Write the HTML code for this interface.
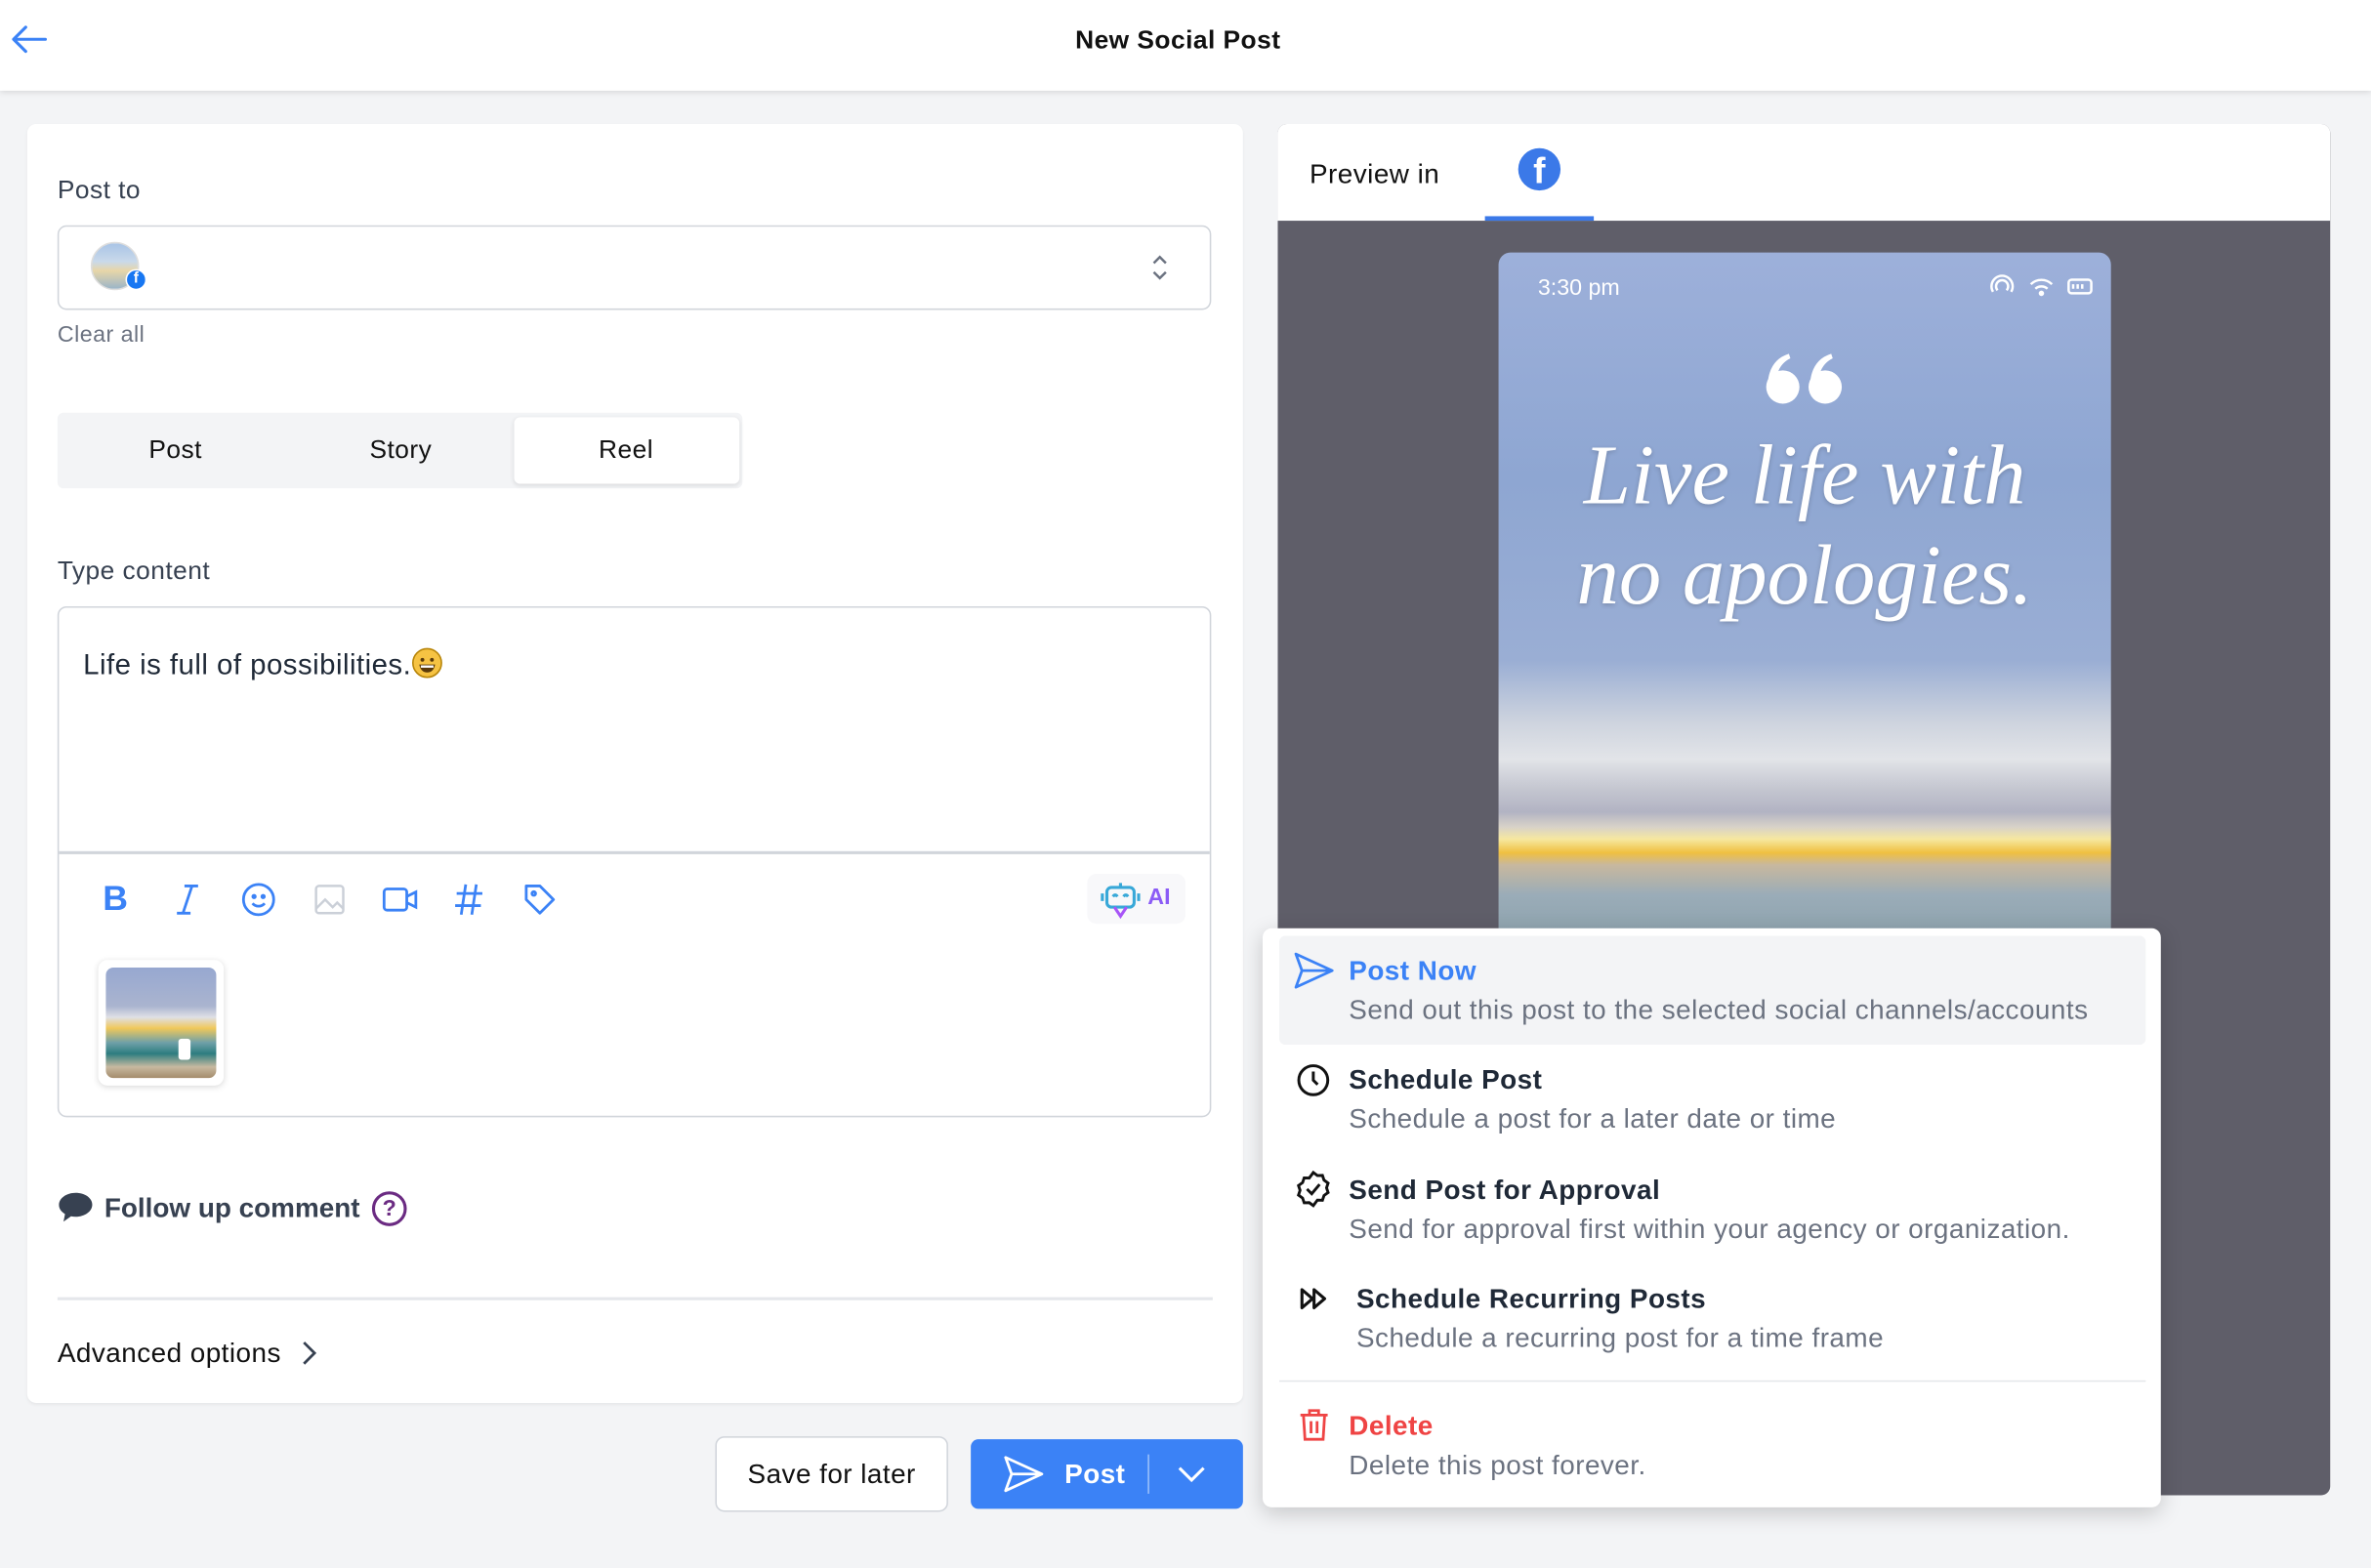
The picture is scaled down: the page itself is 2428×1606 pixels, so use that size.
<!DOCTYPE html>
<html><head><meta charset="utf-8"><style>
*{box-sizing:border-box;margin:0;padding:0}
body{width:2428px;height:1606px;overflow:hidden;background:#f3f4f6;font-family:"Liberation Sans",sans-serif}
#w{width:1568px;height:1037px;transform:scale(1.5485);transform-origin:0 0;position:relative;background:#f3f4f6}
.a{position:absolute}
.t{position:absolute;white-space:nowrap}
.g{letter-spacing:.3px}
</style></head><body><div id="w">
<div class="a" style="left:0;top:0;width:1568px;height:60px;background:#fff;box-shadow:0 1px 4px rgba(0,0,0,.12)"></div>
<svg class="a" style="left:6px;top:16px" width="26" height="20" viewBox="0 0 26 20"><path d="M24 10H3M11 2L3 10l8 8" stroke="#3b82f6" stroke-width="2" fill="none" stroke-linecap="round" stroke-linejoin="round"/></svg>
<div class="t" style="left:0;width:1558px;text-align:center;top:17px;font-size:17px;font-weight:bold;color:#111;letter-spacing:.3px">New Social Post</div>

<div class="a" style="left:18px;top:82px;width:804px;height:846px;background:#fff;border-radius:6px;box-shadow:0 1px 2px rgba(0,0,0,.05)"></div>
<div class="t g" style="left:38px;top:116px;font-size:17px;color:#374151">Post to</div>
<div class="a" style="left:38px;top:149px;width:763px;height:56px;border:1px solid #d1d5db;border-radius:6px"></div>
<div class="a" style="left:60px;top:160px;width:32px;height:32px;border-radius:50%;background:linear-gradient(#a9c4e6 0,#c9d9ea 40%,#e8d6a8 60%,#9bb5c8 100%);border:1px solid #ddd"></div>
<div class="a" style="left:83px;top:178px;width:14px;height:14px;border-radius:50%;background:#1877f2;border:1.5px solid #fff;color:#fff;font-size:10px;font-weight:bold;text-align:center;line-height:12px">f</div>
<svg class="a" style="left:760px;top:166px" width="14" height="22" viewBox="0 0 14 22"><path d="M3 8l4-4 4 4M3 14l4 4 4-4" stroke="#6b7280" stroke-width="1.6" fill="none"/></svg>
<div class="t g" style="left:38px;top:213px;font-size:15px;color:#6b7280">Clear all</div>
<div class="a" style="left:38px;top:273px;width:453px;height:50px;background:#f3f4f6;border-radius:4px"></div>
<div class="a" style="left:340px;top:276px;width:149px;height:44px;background:#fff;border-radius:4px;box-shadow:0 1px 3px rgba(0,0,0,.1)"></div>
<div class="t g" style="left:66px;width:100px;text-align:center;top:288px;font-size:17px;color:#111">Post</div>
<div class="t g" style="left:215px;width:100px;text-align:center;top:288px;font-size:17px;color:#111">Story</div>
<div class="t g" style="left:364px;width:100px;text-align:center;top:288px;font-size:17px;color:#111">Reel</div>
<div class="t g" style="left:38px;top:368px;font-size:17px;color:#374151">Type content</div>
<div class="a" style="left:38px;top:401px;width:763px;height:338px;border:1px solid #d1d5db;border-radius:6px"></div>
<div class="a" style="left:39px;top:563px;width:761px;height:2px;background:#d1d5db"></div>
<div class="t g" style="left:55px;top:428px;font-size:19px;color:#1f2937">Life is full of possibilities.<svg width="21" height="21" viewBox="0 0 20 20" style="vertical-align:-3px"><circle cx="10" cy="10" r="9" fill="#f6c343" stroke="#b8860b" stroke-width="1"/><circle cx="7" cy="8" r="1.2" fill="#5a3a0a"/><circle cx="13" cy="8" r="1.2" fill="#5a3a0a"/><path d="M5 11h10q-1 5-5 5t-5-5z" fill="#5a3a0a"/><path d="M6 11.5h8v1.5h-8z" fill="#fff"/></svg></div>
<div class="t" style="left:68px;top:581px;font-size:23px;font-weight:bold;color:#3b82f6">B</div>
<svg class="a" style="left:114px;top:584px" width="20" height="22" viewBox="0 0 20 22" fill="none" stroke="#3b82f6" stroke-width="1.8"><path d="M8 2h9M3 20h9M13 2L7 20"/></svg>
<svg class="a" style="left:159px;top:583px" width="24" height="24" viewBox="0 0 24 24" fill="none" stroke="#3b82f6" stroke-width="1.8"><circle cx="12" cy="12" r="10"/><path d="M8 14.5c2 2.5 6 2.5 8 0"/><circle cx="9" cy="10" r=".8" fill="#3b82f6"/><circle cx="15" cy="10" r=".8" fill="#3b82f6"/></svg>
<svg class="a" style="left:207px;top:584px" width="22" height="22" viewBox="0 0 22 22" fill="none" stroke="#cbd0d8" stroke-width="1.6"><rect x="2" y="2" width="18" height="18" rx="2"/><path d="M2 17l6-6 5 5 3-3 4 4"/></svg>
<svg class="a" style="left:252px;top:585px" width="26" height="20" viewBox="0 0 26 20" fill="none" stroke="#3b82f6" stroke-width="1.8"><rect x="2" y="3" width="15" height="14" rx="2"/><path d="M17 8l6-3v10l-6-3"/></svg>
<svg class="a" style="left:299px;top:583px" width="22" height="24" viewBox="0 0 22 24" fill="none" stroke="#3b82f6" stroke-width="1.8"><path d="M9 2L6 22M16 2l-3 20M3 8h17M2 16h17"/></svg>
<svg class="a" style="left:345px;top:583px" width="24" height="24" viewBox="0 0 24 24" fill="none" stroke="#3b82f6" stroke-width="1.8"><path d="M3 3h9l9 9-9 9-9-9z" stroke-linejoin="round"/><circle cx="8" cy="8" r="1.2"/></svg>
<div class="a" style="left:719px;top:578px;width:65px;height:33px;background:#f8f8fa;border-radius:6px"></div>
<svg class="a" style="left:727px;top:581px" width="28" height="28" viewBox="0 0 28 28" fill="none" stroke-width="2"><rect x="5" y="6" width="18" height="13" rx="3" stroke="#38a8d8"/><path d="M14 3v3M2 10v5M26 10v5" stroke="#38a8d8"/><path d="M10 19l4 6 4-6" stroke="#a855f7"/><path d="M9 12q1.5-2 3 0M16 12q1.5-2 3 0" stroke="#38a8d8"/></svg>
<div class="t" style="left:759px;top:585px;font-size:15px;font-weight:bold;color:#8b5cf6">AI</div>
<div class="a" style="left:65px;top:635px;width:83px;height:83px;border-radius:6px;background:#fff;box-shadow:0 1px 4px rgba(0,0,0,.15)"></div>
<div class="a" style="left:70px;top:640px;width:73px;height:73px;border-radius:5px;background:linear-gradient(#97a8d0 0,#aab4cf 35%,#dfe0e6 45%,#f0c85a 55%,#6fa0a8 68%,#2d7d80 78%,#c7b9a0 90%,#a48c6c 100%)"></div>
<div class="a" style="left:118px;top:687px;width:8px;height:14px;background:#fff;border-radius:2px"></div>
<svg class="a" style="left:38px;top:787px" width="24" height="24" viewBox="0 0 24 24"><path d="M12 2C6 2 1 5.5 1 10c0 2.5 1.5 4.5 4 6l-1 5 5-3.5c1 .2 2 .3 3 .3 6 0 11-3.5 11-8S18 2 12 2z" fill="#374151"/></svg>
<div class="t" style="left:69px;top:789px;font-size:18px;font-weight:bold;color:#374151">Follow up comment</div>
<div class="a" style="left:246px;top:788px;width:23px;height:23px;border-radius:50%;border:2px solid #6b2b82;color:#6b2b82;font-size:15px;font-weight:bold;text-align:center;line-height:19px">?</div>
<div class="a" style="left:38px;top:858px;width:764px;height:2px;background:#e5e7eb"></div>
<div class="t g" style="left:38px;top:885px;font-size:18px;color:#111">Advanced options</div>
<svg class="a" style="left:198px;top:886px" width="12" height="18" viewBox="0 0 12 18"><path d="M3 2l7 7-7 7" stroke="#374151" stroke-width="1.8" fill="none"/></svg>

<div class="a" style="left:845px;top:82px;width:696px;height:907px;background:#5f5e69;border-radius:6px;overflow:hidden">
<div class="a" style="left:0;top:0;width:696px;height:64px;background:#fff"></div>
<div class="t g" style="left:21px;top:23px;font-size:18px;color:#111">Preview in</div>
<div class="a" style="left:159px;top:16px;width:28px;height:28px;border-radius:50%;background:#3b79e8;color:#fff;font-weight:bold;font-size:24px;text-align:center;line-height:32px;overflow:hidden">f</div>
<div class="a" style="left:137px;top:61px;width:72px;height:3px;background:#3b79e8"></div>
<div class="a" style="left:146px;top:85px;width:405px;height:900px;border-radius:8px;background:linear-gradient(#9db0da 0,#8ea6d2 150px,#9aaed4 270px,#cdd3de 310px,#e2e4e8 335px,#c4c6d0 355px,#b2b3c3 370px,#d8d2c8 380px,#f6e8a0 388px,#f0c040 397px,#c8b89e 405px,#9aacb8 425px,#8aa0aa 460px)"></div>
<div class="t" style="left:172px;top:100px;font-size:15px;color:#fff">3:30 pm</div>
<svg class="a" style="left:470px;top:98px" width="72" height="18" viewBox="0 0 72 18" fill="none" stroke="#fff" stroke-width="1.6"><path d="M3 13a7 7 0 1 1 12 0M6 12a4 4 0 1 1 6 0"/><path d="M28 8a10 10 0 0 1 14 0M31 11a6 6 0 0 1 8 0"/><circle cx="35" cy="14" r="1" fill="#fff"/><rect x="53" y="5" width="15" height="9" rx="2"/><path d="M56 8v3M59 8v3M62 8v3"/></svg>
<svg class="a" style="left:322px;top:150px" width="54" height="36" viewBox="0 0 54 36" fill="#fff"><circle cx="12" cy="24" r="11"/><path d="M2 22Q3 6 16 2l1 3Q9 9 8 18z"/><circle cx="40" cy="24" r="11"/><path d="M30 22Q31 6 44 2l1 3Q37 9 36 18z"/></svg>
<div class="t" style="left:146px;width:405px;text-align:center;top:200px;font-size:56px;font-style:italic;color:#fff;font-family:'Liberation Serif',serif;line-height:66px;text-shadow:0 1px 3px rgba(0,0,0,.2)">Live life with<br>no apologies.</div>
</div>

<div class="a" style="left:835px;top:614px;width:594px;height:383px;background:#fff;border-radius:6px;box-shadow:0 4px 14px rgba(0,0,0,.18)"></div>
<div class="a" style="left:846px;top:619px;width:573px;height:72px;background:#f3f4f6;border-radius:4px"></div>
<svg class="a" style="left:855px;top:629px" width="28" height="26" viewBox="0 0 28 26" fill="none" stroke="#3b82f6" stroke-width="1.8" stroke-linejoin="round"><path d="M2 2l24 11L2 24l4-11z M6 13h20"/></svg>
<div class="t g" style="left:892px;top:632px;font-size:18px;font-weight:bold;color:#3b82f6">Post Now</div>
<div class="t g" style="left:892px;top:658px;font-size:18px;color:#6b7280">Send out this post to the selected social channels/accounts</div>
<svg class="a" style="left:857px;top:703px" width="23" height="23" viewBox="0 0 24 24" fill="none" stroke="#111" stroke-width="2"><circle cx="12" cy="12" r="10"/><path d="M12 6v6l3 3"/></svg>
<div class="t g" style="left:892px;top:704px;font-size:18px;font-weight:bold;color:#1f2937">Schedule Post</div>
<div class="t g" style="left:892px;top:730px;font-size:18px;color:#6b7280">Schedule a post for a later date or time</div>
<svg class="a" style="left:856px;top:774px" width="25" height="25" viewBox="0 0 24 24" fill="none" stroke="#111" stroke-width="1.8"><path d="M12 1.5l2.6 1.9 3.2-.1 1 3 2.6 1.9-1 3 1 3-2.6 1.9-1 3-3.2-.1L12 22.5l-2.6-1.9-3.2.1-1-3-2.6-1.9 1-3-1-3 2.6-1.9 1-3 3.2.1z"/><path d="M8 12l3 3 5-6"/></svg>
<div class="t g" style="left:892px;top:777px;font-size:18px;font-weight:bold;color:#1f2937">Send Post for Approval</div>
<div class="t g" style="left:892px;top:803px;font-size:18px;color:#6b7280">Send for approval first within your agency or organization.</div>
<svg class="a" style="left:859px;top:851px" width="21" height="16" viewBox="0 0 21 16" fill="none" stroke="#111" stroke-width="2" stroke-linejoin="round"><path d="M2 2l7 6-7 6zM10 2l7 6-7 6z"/></svg>
<div class="t g" style="left:897px;top:849px;font-size:18px;font-weight:bold;color:#1f2937">Schedule Recurring Posts</div>
<div class="t g" style="left:897px;top:875px;font-size:18px;color:#6b7280">Schedule a recurring post for a time frame</div>
<div class="a" style="left:846px;top:913px;width:573px;height:1px;background:#e5e7eb"></div>
<svg class="a" style="left:858px;top:931px" width="22" height="23" viewBox="0 0 22 23" fill="none" stroke="#ef4444" stroke-width="1.8"><path d="M2 5h18M8 5V2h6v3M4 5l1 16h12l1-16M9 9v8M13 9v8"/></svg>
<div class="t g" style="left:892px;top:933px;font-size:18px;font-weight:bold;color:#ef4444">Delete</div>
<div class="t g" style="left:892px;top:959px;font-size:18px;color:#6b7280">Delete this post forever.</div>

<div class="a" style="left:473px;top:950px;width:154px;height:50px;border:1px solid #d1d5db;border-radius:6px;background:#fff"></div>
<div class="t g" style="left:473px;width:154px;text-align:center;top:965px;font-size:18px;color:#111">Save for later</div>
<div class="a" style="left:642px;top:952px;width:180px;height:46px;background:#3b82f6;border-radius:5px"></div>
<svg class="a" style="left:663px;top:962px" width="28" height="26" viewBox="0 0 28 26" fill="none" stroke="#fff" stroke-width="1.8" stroke-linejoin="round"><path d="M2 2l24 11L2 24l4-11z M6 13h20"/></svg>
<div class="t g" style="left:704px;top:965px;font-size:18px;font-weight:bold;color:#fff">Post</div>
<div class="a" style="left:759px;top:962px;width:1px;height:26px;background:rgba(255,255,255,.5)"></div>
<svg class="a" style="left:778px;top:968px" width="20" height="14" viewBox="0 0 20 14"><path d="M2 3l8 8 8-8" stroke="#fff" stroke-width="2" fill="none"/></svg>
</div></body></html>
